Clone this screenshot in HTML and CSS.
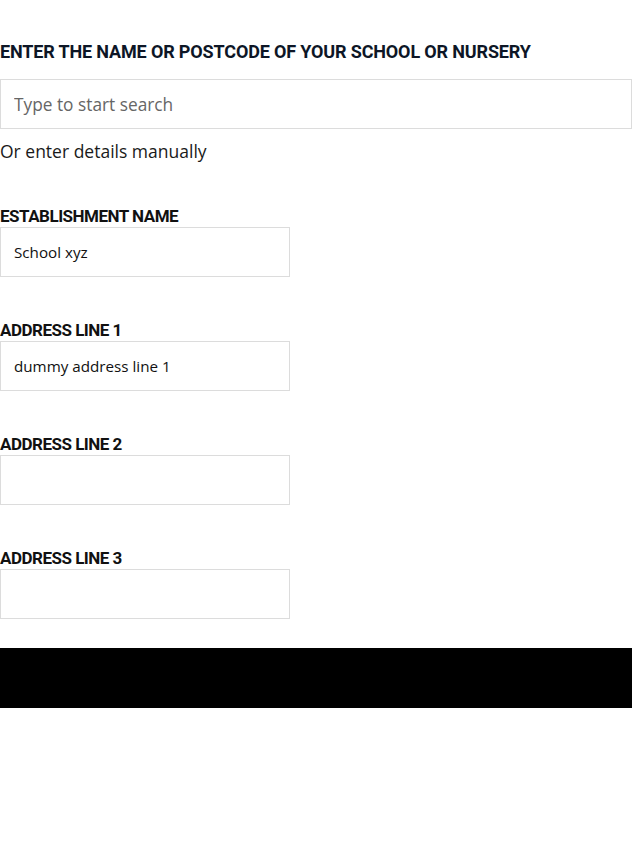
FILE: index.html
```html
<!DOCTYPE html>
<html lang="en">
<head>
<meta charset="utf-8">
<title>School search</title>
<link rel="stylesheet" href="styles.css">
</head>
<body>
<main class="page">
  <h1 class="title">ENTER THE NAME OR POSTCODE OF YOUR SCHOOL OR NURSERY</h1>
  <input class="search" type="text" placeholder="Type to start search">
  <p class="manual">Or enter details manually</p>
  <div class="fields">
    <div class="field">
      <label class="label">ESTABLISHMENT NAME</label>
      <input class="input" type="text" value="School xyz">
    </div>
    <div class="field">
      <label class="label">ADDRESS LINE 1</label>
      <input class="input" type="text" value="dummy address line 1">
    </div>
    <div class="field">
      <label class="label">ADDRESS LINE 2</label>
      <input class="input" type="text" value="">
    </div>
    <div class="field">
      <label class="label">ADDRESS LINE 3</label>
      <input class="input" type="text" value="">
    </div>
  </div>
  <div class="bar"></div>
</main>
</body>
</html>
```
FILE: styles.css
```css
* { box-sizing: border-box; }
html, body { margin: 0; padding: 0; background: #fff; }
body { font-family: "Open Sans", "Liberation Sans", sans-serif; color: #111; }
.page { padding-top: 41px; display: flex; flex-direction: column; }
.title {
  margin: 0 0 16px 0;
  font-family: Roboto, "Liberation Sans", sans-serif;
  font-weight: 700;
  font-size: 18px;
  line-height: 22px;
  letter-spacing: -0.15px;
  color: #0d1626;
}
.search {
  width: 632px;
  height: 50px;
  border: 1px solid #dcdcdc;
  padding: 0 13px;
  font-family: "Open Sans", sans-serif;
  font-size: 17.3px;
  color: #222;
  outline: none;
}
.search::placeholder { color: #666; }
.manual {
  margin: 11px 0 0 0;
  font-size: 17.5px;
  line-height: 22px;
  color: #1a1a1a;
}
.fields { display: flex; flex-direction: column; gap: 42px; margin-top: 43px; }
.field { display: flex; flex-direction: column; }
.label {
  font-family: Roboto, "Liberation Sans", sans-serif;
  font-weight: 700;
  font-size: 17px;
  line-height: 22px;
  letter-spacing: -0.5px;
  color: #111;
}
.input {
  width: 290px;
  height: 50px;
  border: 1px solid #dcdcdc;
  padding: 0 13px;
  font-family: "Open Sans", sans-serif;
  font-size: 15.2px;
  color: #111;
  outline: none;
}
.bar { margin-top: 29px; height: 60px; background: #000; width: 632px; }
```
